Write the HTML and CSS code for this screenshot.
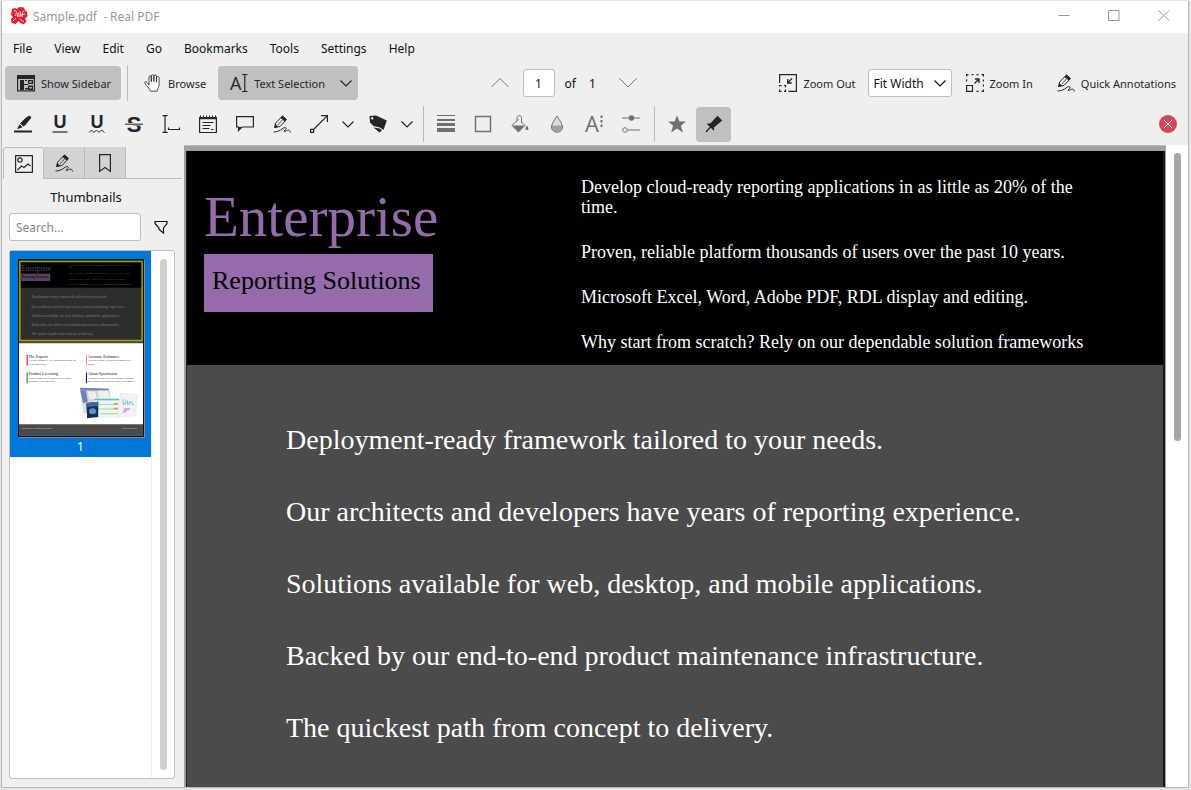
FILE: index.html
```html
<!DOCTYPE html>
<html lang="en">

<head>
  <meta charset="utf-8">
  <title>Sample.pdf - Real PDF</title>
  <meta name="viewport" content="width=device-width, initial-scale=1">
  <link rel="stylesheet" href="styles.css">
</head>

<body>
  <!-- shared icons -->
  <svg class="defs">
    <symbol id="i-down" viewBox="0 0 18 18">
      <path d="M3.500 6.500 9 12l5.500-5.500" fill="none" stroke="currentColor" stroke-width="1.200" />
    </symbol>
    <symbol id="i-pencil" viewBox="0 0 18 18">
      <path d="m1.500 12.500 1.200-4.500L9.500.9l4 3.600L7 11.500z" fill="none" stroke="currentColor" />
      <path d="M7.500 3 9.500.8 13.500 4.500 11.800 6.500zM1.300 13l1-4 3 2.800z" fill="currentColor" />
      <path d="M4.800 10 9.800 4.600" stroke="currentColor" stroke-width=".8" />
      <path d="M.5 17c4 0 6.500-1.500 8.500-3 3.500-2.800 5.500-1 3 1-1.500 1.300-.5 2 1 1 2-1.300 4-1.500 4.500 1.500" fill="none" stroke="currentColor" />
    </symbol>
  </svg>

  <div class="window">
    <header class="titlebar">
      <svg class="logo" viewBox="0 0 18 18">
        <path d="M2 2 5 1l2 1 2-2 5 .5 1 3 2 1 .5 5-2.500 2 1.500 3-3 3-3-1.500-2-2-3 3-4-1L1 12l2-2-2-2 .5-3z" fill="#e8202c" />
        <path d="M4 4c3-2 3 2 1 5M7.500 9c3-1 1-5 0-2s1 4 3 1M10 4l1 6M12.500 10c-1-5 1-7 2-5M11 8l4-1M3 14l3-3M10 12l4 3" fill="none" stroke="#fff" stroke-width=".8" />
      </svg>
      <span class="title">Sample.pdf &nbsp;- Real PDF</span>
      <div class="window-buttons">
        <button aria-label="Minimize"><svg viewBox="0 0 12 12"><path d="M.5 5.500h11" /></svg></button>
        <button aria-label="Maximize"><svg viewBox="0 0 12 12"><path d="M.5.500h10.500v10H.5z" /></svg></button>
        <button aria-label="Close"><svg viewBox="0 0 12 12"><path d="m.5.500 10.500 10m0-10-10.500 10" /></svg></button>
      </div>
    </header>

    <nav class="menubar">
      <button>File</button>
      <button>View</button>
      <button>Edit</button>
      <button>Go</button>
      <button>Bookmarks</button>
      <button>Tools</button>
      <button>Settings</button>
      <button>Help</button>
    </nav>

    <div class="toolbar">
      <div class="group">
        <button class="tool active sidebar-toggle">
          <svg viewBox="0 0 18 18"><path d="M0 1h18v16.500H0z" fill="currentColor" /><path d="M1.200 5h15.600v11.300H1.200z" fill="#c0c0c0" /><path d="M3 6h4v10H3zM7 10h4v1H7zM11 6h5v4h-5zM11 11.500h5V16h-5zM8 6h2v1H8zM8 14h3v1.500H8z" fill="currentColor" /><path d="M12.300 7.300h2.400v1.500h-2.400zM12.300 13h2.400v1.500h-2.400z" fill="#c0c0c0" /></svg>
          Show Sidebar
        </button>
        <span class="separator"></span>
        <button class="tool">
          <svg viewBox="0 0 18 18"><path d="M5 10.500V3.200c0-1.800 2.300-1.800 2.300 0v4.500V2c0-1.700 2.600-1.700 2.600 0v5.700V2.200c0-1.700 2.600-1.700 2.600 0V8.200 3.700c0-1.700 2.600-1.500 2.600 0v7c0 2.500-1.500 3.500-2 6.500H6.500C5.500 14 2.500 12.500.9 9.200c-.6-1.500 1-2 1.900-.9L5 11z" fill="#f8f8f8" stroke="currentColor" stroke-width=".8" /></svg>
          Browse
        </button>
        <button class="tool active text-selection">
          <svg viewBox="0 0 18 18"><text x="0" y="16" font-size="18" class="glyph">A</text><path d="M12 .5h5.500M12 17.500h5.500M14.800.5v17" stroke="currentColor" stroke-width="1.200" /></svg>
          Text Selection
          <svg class="arrow"><use href="#i-down" /></svg>
        </button>
      </div>
      <div class="group pager">
        <button class="nav" aria-label="Previous page"><svg viewBox="0 0 18 18"><path d="M.5 13 9 4.500l8.500 8.500" /></svg></button>
        <input id="page-number" type="text" value="1" aria-label="Page">
        <label for="page-number">of</label>
        <span class="total">1</span>
        <button class="nav" aria-label="Next page"><svg viewBox="0 0 18 18"><path d="M.5 4.500 9 13l8.500-8.500" /></svg></button>
      </div>
      <div class="group">
        <button class="tool">
          <svg viewBox="0 0 18 18" fill="none" stroke="currentColor" stroke-width="1.200"><path d="M.6 9V.6h16.800v16.800H9.500" /><path d="M.6 12.500v-1h2M5 11.500h1.500v2M6.500 15.500v1.900H5M2.500 17.400H.6V15.500" /><path d="m13 4.500-4 4M8.700 5v4h4" stroke-width="1.300" /></svg>
          Zoom Out
        </button>
        <div class="select">
          <select aria-label="Zoom">
            <option>Fit Width</option>
            <option>Fit Page</option>
            <option>100%</option>
          </select>
          <svg><use href="#i-down" /></svg>
        </div>
        <button class="tool zoom-in">
          <svg viewBox="0 0 18 18" fill="none" stroke="currentColor" stroke-width="1.200"><path d="M.6 2.500V.6h1.900M5.500.6h2M10.500.6h2M15.500.6h1.900v1.900M17.400 5.500v2M17.400 10.500v2M17.400 15.500v1.900h-1.900M12.500 17.400h-2M.6 5.500v2" /><path d="M.6 11.500h5.900v5.900H.6z" /><path d="m8.500 9.500 4.200-4.200M9 5h4v4" stroke-width="1.300" /></svg>
          Zoom In
        </button>
        <button class="tool">
          <svg><use href="#i-pencil" /></svg>
          Quick Annotations
        </button>
      </div>
    </div>

    <div class="annotations">
      <button aria-label="Highlighter"><svg viewBox="0 0 18 18"><path d="M0 15.500h18v2H0zM12 2.500 15.500.5 17.500 2.500 11.500 10 9.500 11.500 6 8.500zM5.500 9.500l3 2.500-1.500 1-4 1z" fill="currentColor" /></svg></button>
      <button aria-label="Underline"><svg viewBox="0 0 18 18"><text x="9" y="13" class="glyph bold" font-size="18" text-anchor="middle">U</text><path d="M1.500 17h15" stroke="currentColor" stroke-width="1.200" /></svg></button>
      <button aria-label="Squiggle"><svg viewBox="0 0 18 18"><text x="9" y="13" class="glyph bold" font-size="18" text-anchor="middle">U</text><path d="m1 17.500 2.500-2.500L6 17.500 8.500 15l2.500 2.500 2.500-2.500 3 2.500" fill="none" stroke="currentColor" /></svg></button>
      <button aria-label="Strike out"><svg viewBox="0 0 18 18"><text x="9" y="17" class="glyph bold" font-size="22" text-anchor="middle">S</text><path d="M0 8h18v2.500H0z" fill="#efefef" /><path d="M0 9.200h18" stroke="currentColor" /></svg></button>
      <button aria-label="Typewriter"><svg viewBox="0 0 18 18"><path d="M.5.600h5M.5 17.400h5M3 .6v16.800M6.500 12.500v2h11v-2" fill="none" stroke="currentColor" stroke-width="1.200" /></svg></button>
      <button aria-label="Inline note"><svg viewBox="0 0 18 18"><path d="M.6 2.500h16.800v15H.6z" fill="none" stroke="currentColor" stroke-width="1.200" /><path d="M0 2h18v2.200H0zM1 .5h1V3H1zM4 .5h1V3H4zM7 .5h1V3H7zM10 .5h1V3h-1zM13 .5h1V3h-1zM16 .5h1V3h-1z" fill="currentColor" /><path d="M3.500 7.500h11M3.500 10.500h8M3.500 13.500h7M12 14.500h2.500" stroke="currentColor" /></svg></button>
      <button aria-label="Pop-up note"><svg viewBox="0 0 18 18"><path d="M.6 1.600h16.800V12H6l-3.500 3.500V12H.6z" fill="none" stroke="currentColor" stroke-width="1.200" /><path d="M2 12h4L2 16z" fill="currentColor" /></svg></button>
      <button class="current" aria-label="Freehand line"><svg><use href="#i-pencil" /></svg></button>
      <button aria-label="Straight line"><svg viewBox="0 0 18 18"><path d="M.6 14.400h3v3h-3zM3.500 14.500 17.200.800M11 .6h6.400V7" fill="none" stroke="currentColor" stroke-width="1.200" /></svg></button>
      <button class="more" aria-label="More shapes"><svg><use href="#i-down" /></svg></button>
      <button aria-label="Stamp"><svg viewBox="0 0 18 18"><path fill-rule="evenodd" d="M.5 1 7 .5l10.800 5L14.500 15 11 12.500 4.500 11 1 7.500zM2 3.200a1.200 1.200 0 1 0 2.400 0 1.200 1.200 0 0 0-2.400 0z" fill="currentColor" /><path d="m4.500 12.500 6.500 1 2 2-2.500 2z" fill="currentColor" /></svg></button>
      <button class="more" aria-label="More stamps"><svg><use href="#i-down" /></svg></button>
      <span class="separator"></span>
      <button class="muted" aria-label="Line width"><svg viewBox="0 0 18 18"><path d="M0 0h18v1H0zM0 4h18v2H0zM0 8h18v3H0zM0 13h18v4H0z" fill="currentColor" /></svg></button>
      <button class="muted" aria-label="Color"><svg viewBox="0 0 18 18"><path d="M1.500 1.500h15v15h-15z" fill="none" stroke="currentColor" stroke-width="1.500" /></svg></button>
      <button class="muted" aria-label="Fill color"><svg viewBox="0 0 18 18"><path d="M6 6V2.500C6 0 10.500 0 10.500 2.500V8M7.500 4.500.8 10.500l6.700 6.500 6.500-6.500-3.500-3.500" fill="none" stroke="currentColor" /><path d="M1.500 10.500h12L7.500 17zM16 10.500c-1.800 2.500-2 4.500 0 4.500s1.800-2 0-4.500z" fill="currentColor" /></svg></button>
      <button class="muted" aria-label="Opacity"><svg viewBox="0 0 18 18"><path d="M9 1C6 6 3.500 9 3.500 12c0 7 11 7 11 0C14.500 9 12 6 9 1z" fill="#ddd" stroke="currentColor" /><path d="M4 10.500h10c1.500 8-11.500 8-10 0z" fill="currentColor" opacity=".55" /></svg></button>
      <button class="muted" aria-label="Font"><svg viewBox="0 0 18 18"><text x="0" y="17" class="glyph" font-size="22">A</text><path d="M15.500.5h2V3h-2zM15.500 5h2v2.500h-2zM15.500 9.500h2V12h-2z" fill="currentColor" /></svg></button>
      <button class="muted" aria-label="Settings"><svg viewBox="0 0 18 18"><path d="M0 3h18M5.500 15H18" stroke="currentColor" stroke-width="1.200" /><circle cx="9.500" cy="3" r="2.700" fill="currentColor" /><circle cx="3" cy="15" r="2.300" fill="none" stroke="currentColor" /></svg></button>
      <span class="separator"></span>
      <button class="muted" aria-label="Add to quick annotations"><svg viewBox="0 0 18 18"><path d="m9 .5 2.500 6h6.300l-4.900 4.200 2 6.800L9 13.500l-5.900 4 2-6.800L.2 6.500h6.300z" fill="currentColor" /></svg></button>
      <button class="active" aria-label="Pin"><svg viewBox="0 0 18 18"><path d="m12.500.8 4.700 4.700-8.200 7-.5 2.500-6-6 3-.8z" fill="currentColor" /><path d="m7 10.500-6 6.500M2.500 8.500l6.500 6.500" stroke="currentColor" stroke-width="1.300" /></svg></button>
      <button class="close" aria-label="Close toolbar"><svg viewBox="0 0 18 18"><circle cx="9" cy="9" r="9" fill="#da4453" /><path d="m5 5 8 8m0-8-8 8" stroke="#fff" /></svg></button>
    </div>

    <main>
      <aside>
        <div class="tabs">
          <button class="selected" aria-label="Thumbnails"><svg viewBox="0 0 18 18" fill="none" stroke="currentColor" stroke-width="1.200"><path d="M.6.6h16.800v16.800H.6z" /><circle cx="5" cy="5" r="2.200" /><path d="m2.500 15 4-4 2.500 1.500 4-3.500 2.500 2" /></svg></button>
          <button aria-label="Annotations"><svg><use href="#i-pencil" /></svg></button>
          <button aria-label="Bookmarks"><svg viewBox="0 0 18 18"><path d="M3.600.6h10.800v16.800L9 13.500l-5.400 3.900z" fill="none" stroke="currentColor" stroke-width="1.200" /></svg></button>
          <span class="tab-rest"></span>
        </div>
        <h2>Thumbnails</h2>
        <div class="search">
          <input type="text" placeholder="Search..." aria-label="Search">
          <button aria-label="Filter"><svg viewBox="0 0 18 18"><path d="M3 3.500h12v2L11.500 10v5L7 11.500V10L3 5.500z" fill="none" stroke="currentColor" stroke-width="1.200" /></svg></button>
        </div>
        <div class="thumbnails">
          <div class="list">
            <button class="thumbnail">
              <svg viewBox="0 0 976 1376">
                <path d="M0 0h976v1376H0z" fill="#4b4b4b" />
                <path d="M0 0h976v214H0z" fill="#000" />
                <text x="17" y="85" font-size="57" fill="#966bac">Enterprise</text>
                <path d="M17 103h229v58H17z" fill="#966bac" />
                <text x="25" y="139" font-size="26" fill="#000">Reporting Solutions</text>
                <g font-size="18" fill="#aaa">
                  <text x="394" y="42">Develop cloud-ready reporting applications in as little as 20% of the</text>
                  <text x="394" y="61">time.</text>
                  <text x="394" y="106">Proven, reliable platform thousands of users over the past 10 years.</text>
                  <text x="394" y="151">Microsoft Excel, Word, Adobe PDF, RDL display and editing.</text>
                  <text x="394" y="196">Why start from scratch? Rely on our dependable solution frameworks</text>
                </g>
                <g font-size="28" fill="#ccc">
                  <text x="99" y="298">Deployment-ready framework tailored to your needs.</text>
                  <text x="99" y="370">Our architects and developers have years of reporting experience.</text>
                  <text x="99" y="442">Solutions available for web, desktop, and mobile applications.</text>
                  <text x="99" y="513">Backed by our end-to-end product maintenance infrastructure.</text>
                  <text x="99" y="585">The quickest path from concept to delivery.</text>
                </g>
                <path d="M0 650h976v638H0z" fill="#fff" />
                <path d="M0 0h976v636H0z" fill="#000" opacity=".4" />
                <path d="M7 7h962v622H7z" fill="none" stroke="#a8a400" stroke-width="12" />
                <path d="M60 742h8v86h-8z" fill="#e00000" />
                <path d="M60 880h8v86h-8z" fill="#008000" />
                <path d="M527 742h8v86h-8z" fill="#ee82ee" />
                <path d="M527 880h8v86h-8z" fill="#0000e0" />
                <g font-size="32" fill="#111">
                  <text x="74" y="768">The Experts</text>
                  <text x="74" y="900">Product Licensing</text>
                  <text x="541" y="768">Accurate Estimates</text>
                  <text x="541" y="900">About Syncfusion</text>
                </g>
                <g font-size="17" fill="#222">
                  <text x="74" y="794">A dedicated number of .NET reporting applications can</text>
                  <text x="74" y="820">use our frameworks.</text>
                  <text x="74" y="932">Volume packages start in connection with product</text>
                  <text x="74" y="952">licensing for your own reports.</text>
                  <text x="541" y="794">If you have reports, you can expect estimates to be</text>
                  <text x="541" y="820">accurate.</text>
                  <text x="541" y="932">Established by more than 7,500 customers, including</text>
                  <text x="541" y="952">many financial institutions and Fortune 500 companies.</text>
                </g>
                <!-- product shots -->
                <path d="m478 1000 230 5 28 160-230 35z" fill="#dcdcdc" />
                <path d="m480 1000 225 8 4 18-225-6z" fill="#7385b8" />
                <path d="m482 1020 45 2 15 90-38 10z" fill="#6d82b8" />
                <path d="m536 1028 68-2 12 65-65 8zM612 1024l92-4 16 65-90 4z" fill="#f5eee4" stroke="#b5b9c8" stroke-width="4" />
                <path d="M590 1085h200v152H590z" fill="#eef3f4" />
                <path d="M592 1088h196v12H592z" fill="#4ac6df" />
                <path d="M620 1128h155v9H620zM620 1164h155v9H620zM640 1200h140v9H640z" fill="#a8dca0" />
                <path d="M745 1120h35v14h-35zM745 1158h35v14h-35z" fill="#ee9b52" />
                <path d="m530 1120 94-8v120l-88 8z" fill="#12305c" />
                <path d="m530 1120 94-8v32l-92 8z" fill="#416897" />
                <ellipse cx="579" cy="1185" rx="28" ry="23" fill="#5a94c8" />
                <path d="m800 1045 132 10-16 165-138 16z" fill="#f2f2f4" stroke="#ddd" stroke-width="4" />
                <path d="M820 1090v40h20v-25h14v25h14v-18h22v20h14" fill="none" stroke="#7ab5dd" stroke-width="7" />
                <path d="m815 1200 15-40h45l-6 18-20 2-6 14z" fill="#d9a3dc" />
                <g font-size="15" fill="#ddd">
                  <text x="20" y="1328">Copyright 2016 Reporting Solutions Inc.</text>
                  <text x="810" y="1328">www.solutions.com</text>
                </g>
              </svg>
              <span>1</span>
            </button>
          </div>
          <div class="scrollbar"><span class="thumb"></span></div>
        </div>
      </aside>

      <section class="viewer">
        <article class="page">
          <div class="hero">
            <div class="brand">
              <h1>Enterprise</h1>
              <p class="badge">Reporting Solutions</p>
            </div>
            <div class="claims">
              <p>Develop cloud-ready reporting applications in as little as 20% of the time.</p>
              <p>Proven, reliable platform thousands of users over the past 10 years.</p>
              <p>Microsoft Excel, Word, Adobe PDF, RDL display and editing.</p>
              <p>Why start from scratch? Rely on our dependable solution frameworks</p>
            </div>
          </div>
          <div class="points">
            <p>Deployment-ready framework tailored to your needs.</p>
            <p>Our architects and developers have years of reporting experience.</p>
            <p>Solutions available for web, desktop, and mobile applications.</p>
            <p>Backed by our end-to-end product maintenance infrastructure.</p>
            <p>The quickest path from concept to delivery.</p>
          </div>
        </article>
      </section>
      <div class="scrollbar page-scroll"><span class="thumb"></span></div>
    </main>
  </div>
</body>

</html>
```
FILE: styles.css
```css
* {
  box-sizing: border-box;
  margin: 0;
  padding: 0;
}

body {
  height: 100vh;
  padding: 1px 2px 2px 1px;
  overflow: hidden;
  background: #e4e4e4;
  color: #111;
  font-family: "Noto Sans", sans-serif;
  font-size: 12px;
}

button,
input,
select {
  font: inherit;
  color: inherit;
  border: none;
  background: none;
}

svg {
  display: block;
  flex: none;
  width: 18px;
  height: 18px;
  overflow: visible;
}

.defs {
  display: none;
}

.glyph {
  fill: currentColor;
  font-family: "Open Sans", sans-serif;
}

.glyph.bold {
  font-family: "Liberation Sans", sans-serif;
  font-weight: bold;
}

.window {
  display: flex;
  flex-direction: column;
  height: 100%;
  border: 1px solid #b8b8b8;
  border-top: none;
  background: #efefef;
}

.titlebar {
  display: flex;
  align-items: center;
  height: 32px;
  padding: 0 18px 2px 8px;
  background: #fff;
  color: #999;
}

.title {
  margin-left: 5px;
}

.window-buttons {
  display: flex;
  gap: 38px;
  margin-left: auto;
}

.window-buttons svg {
  width: 12px;
  height: 12px;
  fill: none;
  stroke: #999;
}

.menubar {
  display: flex;
  height: 30px;
  gap: 22px;
  padding-left: 11px;
}

.toolbar {
  display: flex;
  align-items: center;
  justify-content: space-between;
  height: 40px;
  padding: 0 12px 0 3px;
}

.group {
  display: flex;
  align-items: center;
}

.tool {
  display: flex;
  align-items: center;
  gap: 6px;
  height: 34px;
  white-space: nowrap;
  font-size: 11px;
  color: #232629;
}

.active {
  background: #c0c0c0;
  border-radius: 4px;
}

.sidebar-toggle {
  padding: 0 10px 0 12px;
}

.separator {
  width: 1px;
  height: 36px;
  background: #bbb;
}

.toolbar .separator {
  margin: 0 16px 0 6px;
}

.text-selection {
  margin-left: 12px;
  padding: 0 3px 0 12px;
}

.text-selection .arrow {
  margin-left: 6px;
}

.pager {
  margin-right: 10px;
}

.pager input {
  width: 32px;
  height: 28px;
  margin: 0 10px 0 14px;
  text-align: center;
}

.pager input,
.select select,
.search input {
  border: 1px solid #bdbdbd;
  border-radius: 3px;
  background: #fff;
}

.total {
  margin: 0 23px 0 13px;
}

.nav svg {
  fill: none;
  stroke: #777;
}

.select {
  position: relative;
  margin: 0 14px 0 12px;
}

.select select {
  appearance: none;
  width: 84px;
  height: 28px;
  padding-left: 5px;
}

.select svg {
  position: absolute;
  top: 5px;
  right: 3px;
  pointer-events: none;
}

.zoom-in {
  margin-right: 24px;
}

.annotations {
  display: flex;
  align-items: center;
  gap: 2px;
  height: 42px;
  padding: 0 3px;
  color: #232629;
}

.annotations button {
  display: flex;
  align-items: center;
  justify-content: center;
  width: 35px;
  height: 35px;
}

.annotations .more {
  width: 20px;
}

.annotations .current {
  border: 1px solid #e6eeef;
  border-radius: 4px;
}

.annotations .separator {
  margin: 0 2px 0 4px;
}

.annotations .muted {
  color: #707070;
}

.annotations .close {
  margin-left: auto;
}

main {
  display: flex;
  flex: 1;
  min-height: 0;
}

aside {
  display: flex;
  flex-direction: column;
  width: 182px;
  padding: 2px 2px 8px 1px;
}

.tabs {
  display: flex;
  height: 32px;
  color: #232629;
}

.tabs button {
  display: flex;
  align-items: center;
  justify-content: center;
  width: 41px;
  background: #d3d3d3;
  border-right: 1px solid #bbb;
  border-bottom: 1px solid #bbb;
}

.tabs .selected {
  border: 1px solid #bbb;
  border-bottom: none;
  border-radius: 3px 3px 0 0;
  background: #efefef;
}

.tab-rest {
  flex: 1;
  border-bottom: 1px solid #bbb;
}

h2 {
  margin: 8px 13px 6px 0;
  text-align: center;
  font-size: 13px;
  font-weight: normal;
  line-height: 20px;
}

.search {
  display: flex;
  align-items: center;
  gap: 11px;
  padding-left: 6px;
}

.search input {
  width: 132px;
  height: 28px;
  padding-left: 6px;
}

.search input::placeholder {
  color: #888;
}

.thumbnails {
  display: flex;
  flex: 1;
  min-height: 0;
  margin: 9px 7px 0 6px;
  border: 1px solid #bdbdbd;
  border-radius: 3px;
  background: #fff;
}

.list {
  width: 142px;
  border-right: 1px solid #eee;
}

.thumbnail {
  display: flex;
  flex-direction: column;
  align-items: center;
  width: 100%;
  padding: 8px 0 0;
  background: #0078d7;
  color: #fff;
  line-height: 20px;
}

.thumbnail svg {
  width: 126px;
  height: 178px;
  border: 1px solid #111;
  box-shadow: 1px 1px #888;
  font-family: "Liberation Serif", serif;
}

.scrollbar {
  flex: 1;
  display: flex;
  justify-content: center;
  padding: 8px 0;
}

.scrollbar .thumb {
  width: 7px;
  border-radius: 4px;
  background: #d0d0d0;
}

.viewer {
  flex: 1;
  padding: 5px 1px 0 2px;
  border-top: 1px solid #bbb;
  background: #a0a0a0;
  overflow: hidden;
}

.page {
  height: 100%;
  border-left: 1px solid #222;
  border-right: 2px solid #181818;
  background: #4b4b4b;
  font-family: "Liberation Serif", serif;
}

.hero {
  display: flex;
  height: 214px;
  padding: 0 70px 0 17px;
  background: #000;
  color: #fff;
}

.brand {
  width: 377px;
  padding-top: 34px;
  color: #966bac;
}

h1 {
  font-size: 57px;
  font-weight: normal;
  line-height: 64px;
}

.badge {
  width: 229px;
  height: 58px;
  margin-top: 5px;
  padding: 0 8px;
  background: #966bac;
  color: #000;
  font-size: 26px;
  line-height: 54px;
}

.claims {
  flex: 1;
  padding-top: 26px;
  font-size: 18px;
  line-height: 20px;
}

.claims p {
  margin-bottom: 25px;
}

.points {
  padding: 57px 0 0 99px;
  color: #fff;
  font-size: 28px;
  line-height: 36px;
}

.points p {
  margin-bottom: 36px;
  white-space: nowrap;
}

.page-scroll {
  flex: none;
  width: 22px;
  background: #fff;
}

.page-scroll .thumb {
  height: 288px;
  background: #a5a5a5;
}
```
